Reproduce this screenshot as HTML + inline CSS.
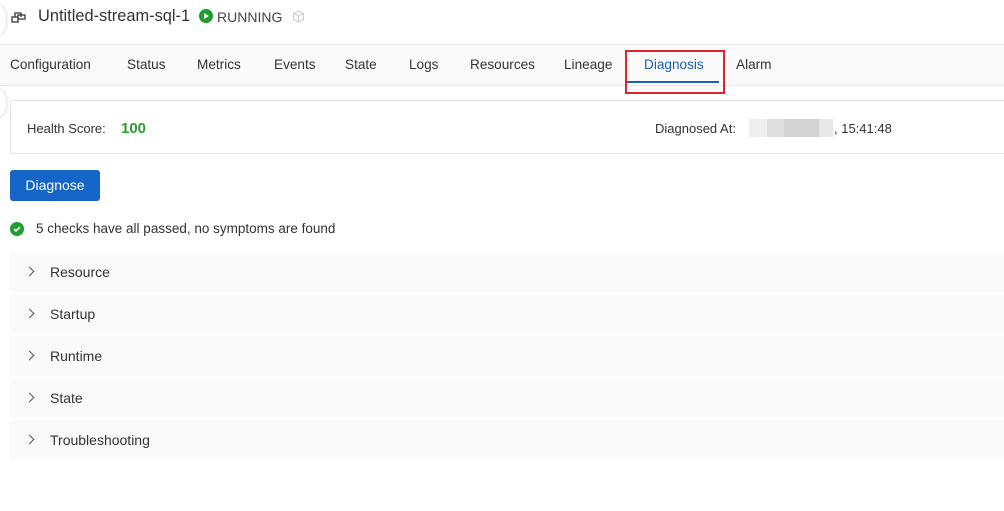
<!DOCTYPE html><html><head><style>
body{margin:0;width:1004px;height:511px;background:#fff;font-family:"Liberation Sans",sans-serif;color:#333;position:relative;overflow:hidden;font-size:14px}
.a{position:absolute;white-space:nowrap}
.row{position:absolute;left:10px;width:994px;height:40px;background:#fafafa;border-bottom:1px solid #fff}
.row span{position:absolute;left:40px;top:12px;font-size:14px;color:#333}
.row i{position:absolute;left:16px;top:16px;width:6px;height:6px;border-top:1.3px solid #555;border-right:1.3px solid #555;transform:rotate(45deg)}
.t{font-size:13.6px;top:57px}
</style></head><body>
<div class="a" style="left:-8px;top:6px;width:14px;height:28px;border-radius:50%;background:#fff;box-shadow:0 0 4px #ccc"></div>
<svg class="a" style="left:11px;top:10px" width="16" height="14" viewBox="0 0 16 14"><path d="M1 7h6v5H1zM4 7V3h6v4M7 5h7v4H7z" fill="none" stroke="#333" stroke-width="1.3"/></svg>
<div class="a" style="left:38px;top:7px;font-size:16.4px;color:#333">Untitled-stream-sql-1</div>
<svg class="a" style="left:199px;top:9px" width="14" height="14"><circle cx="7" cy="7" r="7" fill="#1e9e2e"/><path d="M5 4l5 3-5 3z" fill="#fff"/></svg>
<div class="a" style="left:217px;top:9px;font-size:14px;color:#444">RUNNING</div>
<svg class="a" style="left:292px;top:10px" width="13" height="13" viewBox="0 0 13 13"><path d="M6.5 1l5 2.5v6L6.5 12 1.5 9.5v-6zM1.5 3.5l5 2.5 5-2.5M6.5 6v6" fill="none" stroke="#ccc"/></svg>
<div class="a" style="left:0;top:44px;width:1004px;height:40px;background:#fafafa;border-top:1px solid #e8e8e8;border-bottom:1px solid #e8e8e8"></div>
<div class="a t" style="left:10px">Configuration</div>
<div class="a t" style="left:127px">Status</div>
<div class="a t" style="left:197px">Metrics</div>
<div class="a t" style="left:274px">Events</div>
<div class="a t" style="left:345px">State</div>
<div class="a t" style="left:409px">Logs</div>
<div class="a t" style="left:470px">Resources</div>
<div class="a t" style="left:564px">Lineage</div>
<div class="a t" style="left:644px;color:#1a5fb4">Diagnosis</div>
<div class="a t" style="left:736px">Alarm</div>
<div class="a" style="left:627px;top:81px;width:92px;height:2px;background:#1a5fb4"></div>
<div class="a" style="left:625px;top:50px;width:96px;height:40px;border:2px solid #d9262c"></div>
<div class="a" style="left:-8px;top:90px;width:14px;height:26px;border-radius:50%;background:#fff;box-shadow:0 0 4px #ccc"></div>
<div class="a" style="left:10px;top:100px;width:1000px;height:52px;border:1px solid #e3e3e3;border-radius:2px"></div>
<div class="a" style="left:27px;top:121px;font-size:13px">Health Score:</div>
<div class="a" style="left:121px;top:120px;font-size:15px;font-weight:bold;color:#2f9c2f">100</div>
<div class="a" style="left:655px;top:121px;font-size:13px">Diagnosed At:</div>
<div class="a" style="left:749px;top:119px;width:84px;height:18px;background:linear-gradient(90deg,#eee 0 18px,#ddd 18px 35px,#d4d4d4 35px 70px,#e6e8e8 70px)"></div>
<div class="a" style="left:834px;top:121px;font-size:13px">, 15:41:48</div>
<div class="a" style="left:10px;top:170px;width:90px;height:31px;background:#1565c8;border-radius:3px;color:#fff;text-align:center;line-height:31px;font-size:14px">Diagnose</div>
<svg class="a" style="left:10px;top:222px" width="14" height="14"><circle cx="7" cy="7" r="7" fill="#1e9e2e"/><path d="M4 7l2 2 4-4" fill="none" stroke="#fff" stroke-width="1.6"/></svg>
<div class="a" style="left:36px;top:221px;font-size:13.5px">5 checks have all passed, no symptoms are found</div>
<div class="row" style="top:252px"><i></i><span>Resource</span></div>
<div class="row" style="top:294px"><i></i><span>Startup</span></div>
<div class="row" style="top:336px"><i></i><span>Runtime</span></div>
<div class="row" style="top:378px"><i></i><span>State</span></div>
<div class="row" style="top:420px"><i></i><span>Troubleshooting</span></div>
</body></html>
